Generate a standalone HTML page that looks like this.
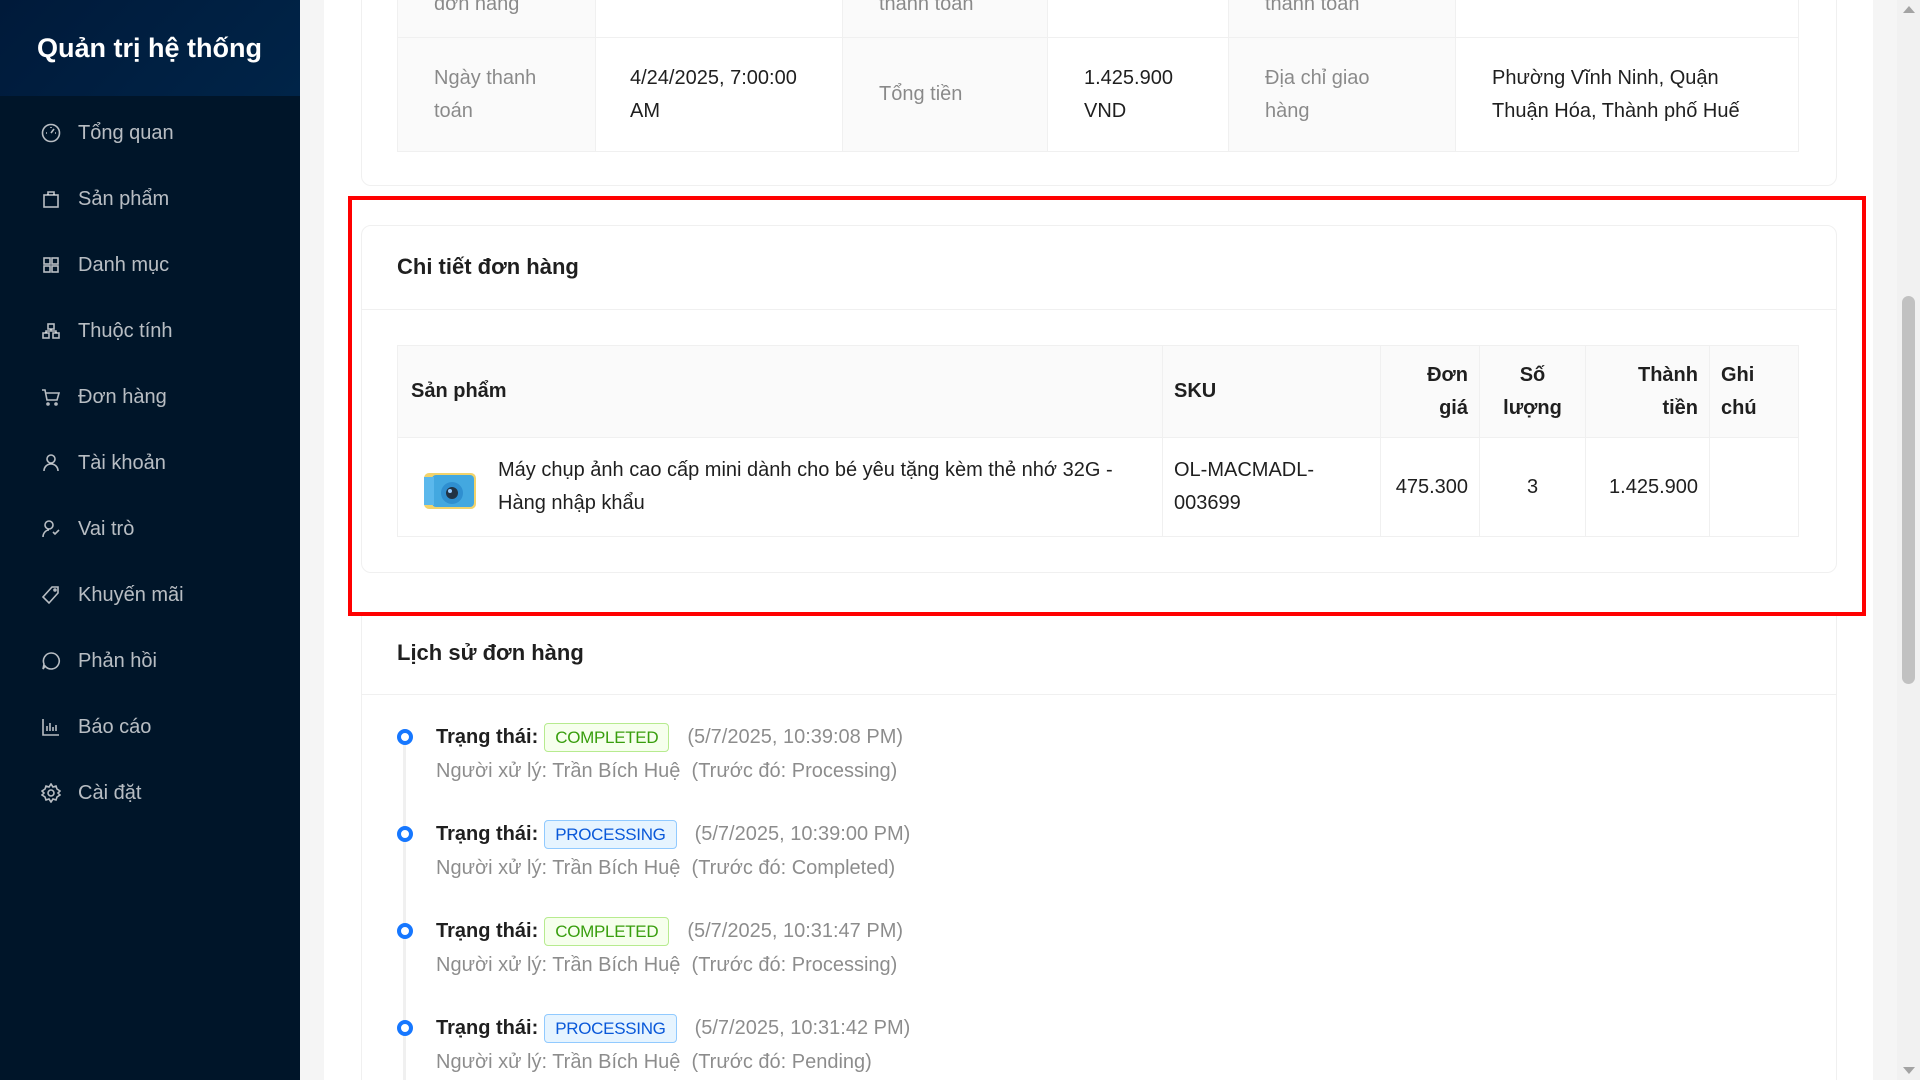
<!DOCTYPE html>
<html><head><meta charset="utf-8">
<style>
*{box-sizing:border-box;margin:0;padding:0}
html{width:1920px;height:1080px;overflow:hidden}
body{width:1920px;height:1080px;overflow:hidden;background:#f5f5f5;font-family:"Liberation Sans",sans-serif;font-size:20px;color:rgba(0,0,0,.88);position:relative}
.side{position:absolute;left:0;top:0;width:300px;height:1080px;background:#001529}
.side .hd{height:96px;background:linear-gradient(135deg,#001a3a,#002448);color:#fff;font-weight:bold;font-size:27px;padding:33px 0 0 37px}
.mi{position:absolute;left:0;width:300px;height:66px;color:rgba(255,255,255,.72);font-size:20px;line-height:66px;padding-left:78px}
.mi svg{position:absolute;left:41px;top:23px;width:20px;height:20px;fill:none;stroke:rgba(255,255,255,.72);stroke-width:1.6}
.wrap{position:absolute;left:324px;top:0;width:1549px;height:1080px;background:#fff}
.card{position:absolute;left:361px;width:1476px;border:1px solid #f0f0f0;border-radius:10px;background:#fff}
table{border-collapse:collapse;position:absolute}
td,th{border:1px solid #f0f0f0;line-height:33px;vertical-align:middle}
.lb{background:#fafafa;color:rgba(0,0,0,.45)}
.ttl{position:absolute;font-size:22px;font-weight:600}
.tag{display:inline-block;border:1px solid;border-radius:4px;font-size:17px;line-height:27px;padding:0 10px;margin:0 18px 0 6px;vertical-align:middle;letter-spacing:-0.3px}
.g{color:#389e0d;background:#f6ffed;border-color:#b7eb8f}
.b{color:#0958d9;background:#e6f4ff;border-color:#91caff}
.ti{position:absolute;left:436px;line-height:34px}
.ti .dot{position:absolute;left:-39px;top:9px;width:16px;height:16px;border:4px solid #1677ff;border-radius:50%;background:#fff}
.gr{color:rgba(0,0,0,.45)}
</style></head><body>
<div class="side">
<div class="hd">Quản trị hệ thống</div>
<div class="mi" style="top:100px"><svg viewBox="0 0 20 20"><circle cx="10" cy="10" r="8.5"/><path d="M10 10l3-4M5 10h1M14 10h1M10 4v1"/></svg>Tổng quan</div>
<div class="mi" style="top:166px"><svg viewBox="0 0 20 20"><rect x="3" y="6" width="14" height="12"/><path d="M7 6V3h6v3"/></svg>Sản phẩm</div>
<div class="mi" style="top:232px"><svg viewBox="0 0 20 20"><rect x="3" y="3" width="6" height="6"/><rect x="11" y="3" width="6" height="6"/><rect x="3" y="11" width="6" height="6"/><rect x="11" y="11" width="6" height="6"/></svg>Danh mục</div>
<div class="mi" style="top:298px"><svg viewBox="0 0 20 20"><rect x="7" y="3" width="6" height="5"/><rect x="2" y="12" width="6" height="5"/><rect x="12" y="12" width="6" height="5"/><path d="M10 8v2M5 12v-2h10v2"/></svg>Thuộc tính</div>
<div class="mi" style="top:364px"><svg viewBox="0 0 20 20"><path d="M1 3h3l2 10h10l2-7H5"/><circle cx="7" cy="17" r="1"/><circle cx="15" cy="17" r="1"/></svg>Đơn hàng</div>
<div class="mi" style="top:430px"><svg viewBox="0 0 20 20"><circle cx="10" cy="6" r="4"/><path d="M3 18c0-4 3-7 7-7s7 3 7 7"/></svg>Tài khoản</div>
<div class="mi" style="top:496px"><svg viewBox="0 0 20 20"><circle cx="8" cy="6" r="4"/><path d="M2 18c0-4 3-7 6-7M12 13l2 2 4-4"/></svg>Vai trò</div>
<div class="mi" style="top:562px"><svg viewBox="0 0 20 20"><path d="M11 2h6v6l-9 10-6-6z"/><circle cx="14" cy="5" r="1"/></svg>Khuyến mãi</div>
<div class="mi" style="top:628px"><svg viewBox="0 0 20 20"><path d="M10 2a8 8 0 1 1-6 13l-2 3 1-5a8 8 0 0 1 7-11z"/></svg>Phản hồi</div>
<div class="mi" style="top:694px"><svg viewBox="0 0 20 20"><path d="M2 2v16h16M6 14V9M9 14V6M12 14v-4M15 14V8"/></svg>Báo cáo</div>
<div class="mi" style="top:760px"><svg viewBox="0 0 20 20"><circle cx="10" cy="10" r="3"/><path d="M10 1l2 3 3-1 1 3 3 2-2 2 2 2-3 2-1 3-3-1-2 3-2-3-3 1-1-3-3-2 2-2-2-2 3-2 1-3 3 1z"/></svg>Cài đặt</div>
</div>
<div class="wrap"></div>
<div style="position:absolute;left:1897px;top:0;width:23px;height:1080px;background:#f1f1f1"></div>
<div style="position:absolute;left:1902px;top:296px;width:13px;height:388px;background:#c1c1c1;border-radius:7px"></div>
<div style="position:absolute;left:1903px;top:6px;border:6px solid transparent;border-bottom:7px solid #a3a3a3;border-top:0"></div>
<div style="position:absolute;left:1903px;top:1067px;border:6px solid transparent;border-top:7px solid #a3a3a3;border-bottom:0"></div>

<div class="card" style="top:-20px;height:206px"></div>
<table style="left:397px;top:-30px;width:1402px">
<tr style="height:67px"><td class="lb" style="width:198px;padding:0 36px">đơn hàng</td><td style="width:247px"></td><td class="lb" style="width:205px;padding:0 36px">thanh toán</td><td style="width:181px"></td><td class="lb" style="width:227px;padding:0 36px">thanh toán</td><td></td></tr>
<tr style="height:114px"><td class="lb" style="padding:0 36px">Ngày thanh toán</td><td style="padding:0 34px">4/24/2025, 7:00:00 AM</td><td class="lb" style="padding:0 36px">Tổng tiền</td><td style="padding:0 36px">1.425.900 VND</td><td class="lb" style="padding:0 36px">Địa chỉ giao hàng</td><td style="padding:0 36px">Phường Vĩnh Ninh, Quận Thuận Hóa, Thành phố Huế</td></tr>
</table>

<div class="card" style="top:225px;height:348px">
<div style="position:absolute;left:0;right:0;top:83px;border-top:1px solid #f0f0f0"></div>
</div>
<div class="ttl" style="left:397px;top:254px">Chi tiết đơn hàng</div>
<table style="left:397px;top:345px;width:1402px">
<tr style="height:92px;background:#fafafa;font-weight:600"><th style="width:765px;text-align:left;padding:0 13px">Sản phẩm</th><th style="width:218px;text-align:left;padding:0 11px">SKU</th><th style="width:99px;text-align:right;padding:0 11px">Đơn<br>giá</th><th style="width:106px;padding:0 11px">Số<br>lượng</th><th style="width:124px;text-align:right;padding:0 11px">Thành<br>tiền</th><th style="text-align:left;padding:0 11px">Ghi<br>chú</th></tr>
<tr style="height:99px"><td style="padding:0 13px 0 100px;position:relative">
<svg style="position:absolute;left:22px;top:25px" width="60" height="52" viewBox="0 0 60 52"><rect x="4" y="10" width="52" height="36" rx="5" fill="#f2d36b"/><rect x="12" y="12" width="42" height="32" rx="4" fill="#43a8e0"/><rect x="4" y="14" width="10" height="28" fill="#5bb8ec"/><circle cx="32" cy="30" r="11" fill="#2f8fd0"/><circle cx="32" cy="30" r="6" fill="#234"/><circle cx="30" cy="28" r="2" fill="#9cf"/></svg>
Máy chụp ảnh cao cấp mini dành cho bé yêu tặng kèm thẻ nhớ 32G - Hàng nhập khẩu</td><td style="padding:0 11px">OL-MACMADL-003699</td><td style="text-align:right;padding:0 11px">475.300</td><td style="text-align:center">3</td><td style="text-align:right;padding:0 11px">1.425.900</td><td></td></tr>
</table>
<div style="position:absolute;left:348px;top:196px;width:1518px;height:420px;border:4px solid #f00"></div>

<div class="card" style="top:616px;height:464px;border-top:none;border-bottom:none;border-radius:0">
<div style="position:absolute;left:0;right:0;top:78px;border-top:1px solid #f0f0f0"></div>
</div>
<div class="ttl" style="left:397px;top:640px">Lịch sử đơn hàng</div>
<div style="position:absolute;left:403px;top:745px;width:3px;height:335px;background:#f0f0f0"></div>
<div class="ti" style="top:720px"><span class="dot"></span><b>Trạng thái:</b><span class="tag g">COMPLETED</span><span class="gr">(5/7/2025, 10:39:08 PM)</span><br><span class="gr">Người xử lý: Trần Bích Huệ &nbsp;(Trước đó: Processing)</span></div>
<div class="ti" style="top:817px"><span class="dot"></span><b>Trạng thái:</b><span class="tag b">PROCESSING</span><span class="gr">(5/7/2025, 10:39:00 PM)</span><br><span class="gr">Người xử lý: Trần Bích Huệ &nbsp;(Trước đó: Completed)</span></div>
<div class="ti" style="top:914px"><span class="dot"></span><b>Trạng thái:</b><span class="tag g">COMPLETED</span><span class="gr">(5/7/2025, 10:31:47 PM)</span><br><span class="gr">Người xử lý: Trần Bích Huệ &nbsp;(Trước đó: Processing)</span></div>
<div class="ti" style="top:1011px"><span class="dot"></span><b>Trạng thái:</b><span class="tag b">PROCESSING</span><span class="gr">(5/7/2025, 10:31:42 PM)</span><br><span class="gr">Người xử lý: Trần Bích Huệ &nbsp;(Trước đó: Pending)</span></div>
</body></html>
